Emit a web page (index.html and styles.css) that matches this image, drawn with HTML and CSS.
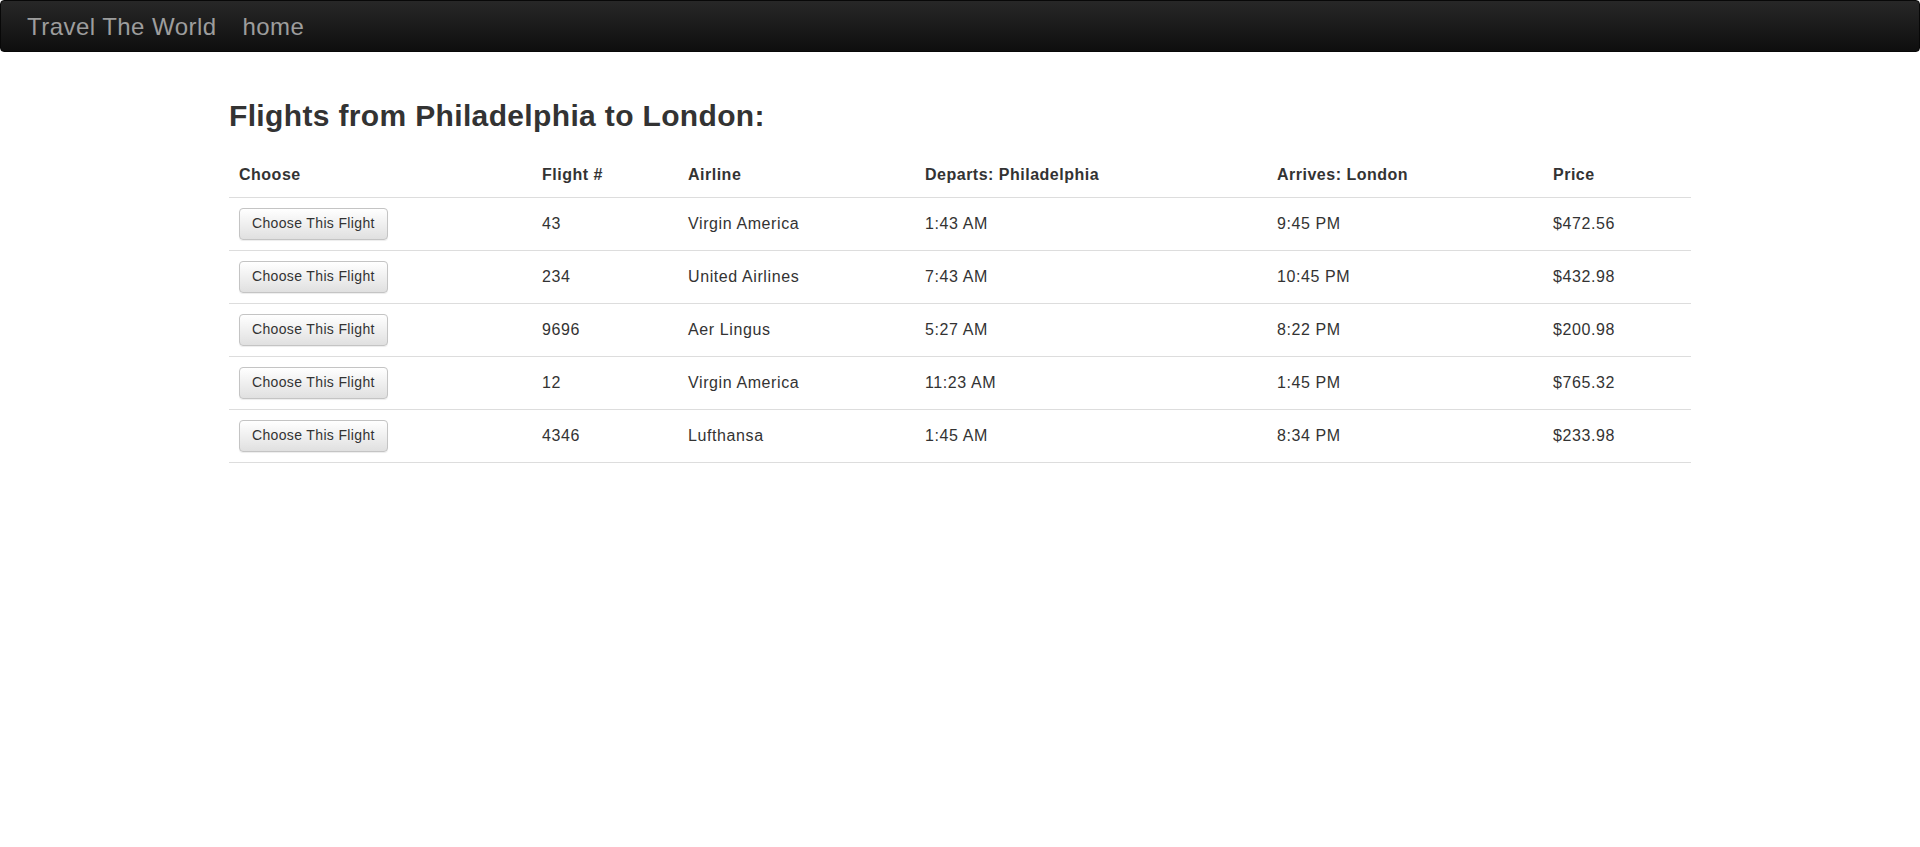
FILE: index.html
```html
<!DOCTYPE html>
<html lang="en">
<head>
<meta charset="utf-8">
<title>Travel The World</title>
<link rel="stylesheet" href="styles.css">
</head>
<body>
<nav class="navbar">
  <a class="brand" href="#">Travel The World</a>
  <a class="nav-link" href="#">home</a>
</nav>
<main class="page">
  <h2 class="title">Flights from Philadelphia to London:</h2>
  <table class="flights">
    <colgroup>
      <col class="c-choose">
      <col class="c-num">
      <col class="c-air">
      <col class="c-dep">
      <col class="c-arr">
      <col class="c-price">
    </colgroup>
    <thead>
      <tr>
        <th>Choose</th>
        <th>Flight #</th>
        <th>Airline</th>
        <th>Departs: Philadelphia</th>
        <th>Arrives: London</th>
        <th>Price</th>
      </tr>
    </thead>
    <tbody>
      <tr>
        <td><button class="btn">Choose This Flight</button></td>
        <td>43</td><td>Virgin America</td><td>1:43 AM</td><td>9:45 PM</td><td>$472.56</td>
      </tr>
      <tr>
        <td><button class="btn">Choose This Flight</button></td>
        <td>234</td><td>United Airlines</td><td>7:43 AM</td><td>10:45 PM</td><td>$432.98</td>
      </tr>
      <tr>
        <td><button class="btn">Choose This Flight</button></td>
        <td>9696</td><td>Aer Lingus</td><td>5:27 AM</td><td>8:22 PM</td><td>$200.98</td>
      </tr>
      <tr>
        <td><button class="btn">Choose This Flight</button></td>
        <td>12</td><td>Virgin America</td><td>11:23 AM</td><td>1:45 PM</td><td>$765.32</td>
      </tr>
      <tr>
        <td><button class="btn">Choose This Flight</button></td>
        <td>4346</td><td>Lufthansa</td><td>1:45 AM</td><td>8:34 PM</td><td>$233.98</td>
      </tr>
    </tbody>
  </table>
</main>
</body>
</html>
```

FILE: styles.css
```css
html, body {
  margin: 0;
  padding: 0;
  background: #fff;
}

body {
  font-family: "Liberation Sans", Arial, Helvetica, sans-serif;
  font-size: 16px;
  color: #333;
}

.navbar {
  box-sizing: border-box;
  height: 52px;
  display: flex;
  align-items: center;
  padding: 1px 0 0 26px;
  background: linear-gradient(to bottom, #272727 0%, #0e0e0e 100%);
  border: 1px solid #080808;
  border-radius: 4px;
}

.brand,
.nav-link {
  font-size: 24px;
  line-height: 48px;
  letter-spacing: 0.45px;
  color: #9d9d9d;
  text-decoration: none;
}

.nav-link {
  margin-left: 26px;
}

.page {
  width: 1462px;
  margin: 0 auto;
}

.title {
  margin: 47px 0 27px;
  font-size: 30px;
  line-height: 33px;
  font-weight: bold;
  letter-spacing: 0.35px;
  color: #333;
}

.flights {
  width: 1462px;
  table-layout: fixed;
  border-collapse: collapse;
  border-spacing: 0;
}

.c-choose { width: 303px; }
.c-num { width: 146px; }
.c-air { width: 237px; }
.c-dep { width: 352px; }
.c-arr { width: 276px; }
.c-price { width: 148px; }

.flights th {
  text-align: left;
  font-weight: bold;
  font-size: 16px;
  line-height: 22px;
  letter-spacing: 0.5px;
  padding: 5px 10px 11px;
  border-bottom: 1px solid #ddd;
  vertical-align: bottom;
}

.flights td {
  padding: 10px 10px;
  font-size: 16px;
  line-height: 22px;
  letter-spacing: 0.6px;
  vertical-align: middle;
  border-top: 1px solid #ddd;
}

.flights tbody tr:last-child td {
  border-bottom: 1px solid #ddd;
}

.btn {
  display: block;
  box-sizing: border-box;
  height: 32px;
  margin: 0;
  padding: 4px 12px 6px;
  font-family: "Liberation Sans", Arial, Helvetica, sans-serif;
  font-size: 14px;
  line-height: 20px;
  letter-spacing: 0.35px;
  color: #333;
  background: linear-gradient(to bottom, #ffffff 0%, #e0e0e0 100%);
  border: 1px solid #c4c4c4;
  border-radius: 4px;
  box-shadow: inset 0 1px 0 rgba(255, 255, 255, 0.15), 0 1px 1px rgba(0, 0, 0, 0.075);
  white-space: nowrap;
  cursor: pointer;
}
```
